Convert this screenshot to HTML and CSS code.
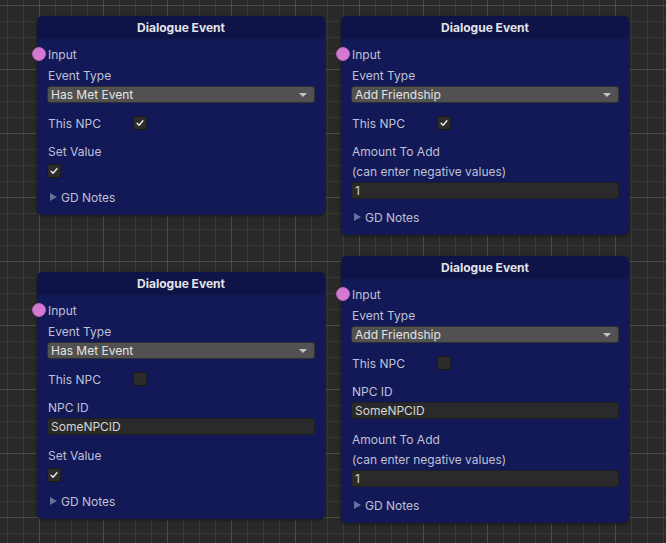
FILE: index.html
```html
<!DOCTYPE html>
<html>
<head>
<meta charset="utf-8">
<link rel="stylesheet" href="styles.css">
</head>
<body>
<div class="canvas">

  <div class="node n1">
    <div class="node-title">Dialogue Event</div>
    <div class="node-body">
      <div class="port-row"><span class="port"></span><span class="label">Input</span></div>
      <div class="group first">
        <div class="label">Event Type</div>
        <div class="dropdown"><span>Has Met Event</span><span class="arrow"></span></div>
      </div>
      <div class="group toggle-row">
        <span class="label toggle-label">This NPC</span>
        <span class="checkbox"><svg viewBox="0 0 14 14"><path d="M3.6 7.3 L5.9 9.6 L10.4 4.4"/></svg></span>
      </div>
      <div class="group">
        <div class="label">Set Value</div>
        <span class="checkbox standalone"><svg viewBox="0 0 14 14"><path d="M3.6 7.3 L5.9 9.6 L10.4 4.4"/></svg></span>
      </div>
      <div class="foldout"><span class="fold-arrow"></span><span class="label">GD Notes</span></div>
    </div>
  </div>

  <div class="node n2">
    <div class="node-title">Dialogue Event</div>
    <div class="node-body">
      <div class="port-row"><span class="port"></span><span class="label">Input</span></div>
      <div class="group first">
        <div class="label">Event Type</div>
        <div class="dropdown"><span>Add Friendship</span><span class="arrow"></span></div>
      </div>
      <div class="group toggle-row">
        <span class="label toggle-label">This NPC</span>
        <span class="checkbox"><svg viewBox="0 0 14 14"><path d="M3.6 7.3 L5.9 9.6 L10.4 4.4"/></svg></span>
      </div>
      <div class="group">
        <div class="label">Amount To Add</div>
        <div class="label">(can enter negative values)</div>
        <div class="textfield">1</div>
      </div>
      <div class="foldout"><span class="fold-arrow"></span><span class="label">GD Notes</span></div>
    </div>
  </div>

  <div class="node n3">
    <div class="node-title">Dialogue Event</div>
    <div class="node-body">
      <div class="port-row"><span class="port"></span><span class="label">Input</span></div>
      <div class="group first">
        <div class="label">Event Type</div>
        <div class="dropdown"><span>Has Met Event</span><span class="arrow"></span></div>
      </div>
      <div class="group toggle-row">
        <span class="label toggle-label">This NPC</span>
        <span class="checkbox"></span>
      </div>
      <div class="group">
        <div class="label">NPC ID</div>
        <div class="textfield">SomeNPCID</div>
      </div>
      <div class="group">
        <div class="label">Set Value</div>
        <span class="checkbox standalone"><svg viewBox="0 0 14 14"><path d="M3.6 7.3 L5.9 9.6 L10.4 4.4"/></svg></span>
      </div>
      <div class="foldout"><span class="fold-arrow"></span><span class="label">GD Notes</span></div>
    </div>
  </div>

  <div class="node n4">
    <div class="node-title">Dialogue Event</div>
    <div class="node-body">
      <div class="port-row"><span class="port"></span><span class="label">Input</span></div>
      <div class="group first">
        <div class="label">Event Type</div>
        <div class="dropdown"><span>Add Friendship</span><span class="arrow"></span></div>
      </div>
      <div class="group toggle-row">
        <span class="label toggle-label">This NPC</span>
        <span class="checkbox"></span>
      </div>
      <div class="group">
        <div class="label">NPC ID</div>
        <div class="textfield">SomeNPCID</div>
      </div>
      <div class="group">
        <div class="label">Amount To Add</div>
        <div class="label">(can enter negative values)</div>
        <div class="textfield">1</div>
      </div>
      <div class="foldout"><span class="fold-arrow"></span><span class="label">GD Notes</span></div>
    </div>
  </div>

</div>
</body>
</html>
```

FILE: styles.css
```css
html, body {
  margin: 0;
  padding: 0;
  width: 100%;
  height: 100%;
}

body {
  font-family: "Inter", "Noto Sans", sans-serif;
  font-size: 12px;
  background-color: #292929;
  background-image:
    linear-gradient(to right, #4a4a4a 1px, transparent 1px),
    linear-gradient(to bottom, #4a4a4a 1px, transparent 1px),
    linear-gradient(to right, #383838 1px, transparent 1px),
    linear-gradient(to bottom, #383838 1px, transparent 1px);
  background-size: 64px 64px, 64px 64px, 16px 16px, 16px 16px;
  background-position: 39px 0, 0 5px, 7px 0, 0 5px;
  overflow: hidden;
}

.canvas {
  position: relative;
  width: 666px;
  height: 543px;
}

.node {
  position: absolute;
  width: 288px;
  background: #131857;
  border-radius: 6px;
  box-shadow: 0 1px 3px rgba(0, 0, 0, 0.55);
}

.n1 { left: 37px; top: 16px; }
.n2 { left: 341px; top: 16px; }
.n3 { left: 37px; top: 272px; }
.n4 { left: 341px; top: 256px; }

.node-title {
  height: 23px;
  line-height: 24px;
  text-align: center;
  font-weight: 700;
  color: #e4e4e8;
  background: #0f1448;
  border-radius: 6px 6px 0 0;
}

.node-body {
  display: flex;
  flex-direction: column;
  padding: 5px 10px 8px 10px;
}

.label {
  display: block;
  line-height: 21px;
  height: 20px;
  padding-left: 1px;
  color: #bec1d5;
  white-space: nowrap;
}

.port-row {
  position: relative;
  height: 20px;
  margin-bottom: 1px;
}

.port {
  position: absolute;
  left: -15px;
  top: 3px;
  width: 14px;
  height: 14px;
  border-radius: 50%;
  background: #d47ad3;
  box-sizing: border-box;
  border: 1px solid #b063b0;
}

.group {
  margin-top: 8px;
}

.group.first {
  margin-top: 0;
}

.dropdown {
  display: flex;
  align-items: center;
  justify-content: space-between;
  box-sizing: border-box;
  height: 17px;
  margin-top: 1px;
  margin-bottom: 2px;
  padding: 0 7px 0 3px;
  background: #515151;
  border: 1px solid #2f2f2f;
  border-radius: 3px;
  color: #e4e4e4;
  line-height: 15px;
}

.arrow {
  width: 0;
  height: 0;
  border-left: 4px solid transparent;
  border-right: 4px solid transparent;
  border-top: 4px solid #c4c4c4;
}

.textfield {
  box-sizing: border-box;
  height: 17px;
  margin-top: 1px;
  margin-bottom: 2px;
  padding: 0 4px 0 3px;
  background: #2a2a2a;
  border: 1px solid #1f1f1f;
  border-radius: 3px;
  color: #d6d6d6;
  line-height: 16px;
}

.toggle-row {
  display: flex;
  align-items: center;
  height: 20px;
}

.toggle-label {
  width: 85px;
}

.checkbox {
  display: block;
  box-sizing: border-box;
  width: 14px;
  height: 14px;
  background: #2c2c2c;
  border: 1px solid #1a1a1a;
  border-radius: 2px;
}

.checkbox svg {
  display: block;
  width: 12px;
  height: 12px;
}

.checkbox path {
  fill: none;
  stroke: #f0f0f0;
  stroke-width: 1.6;
  stroke-linecap: round;
  stroke-linejoin: round;
}

.checkbox.standalone {
  margin-top: 3px;
  margin-bottom: 3px;
}

.foldout {
  display: flex;
  align-items: center;
  height: 20px;
  margin-top: 6px;
}

.fold-arrow {
  width: 0;
  height: 0;
  margin-left: 3px;
  margin-right: 4px;
  border-top: 4px solid transparent;
  border-bottom: 4px solid transparent;
  border-left: 7px solid #6b6f9c;
}

.foldout .label {
  padding-left: 0;
}
```
